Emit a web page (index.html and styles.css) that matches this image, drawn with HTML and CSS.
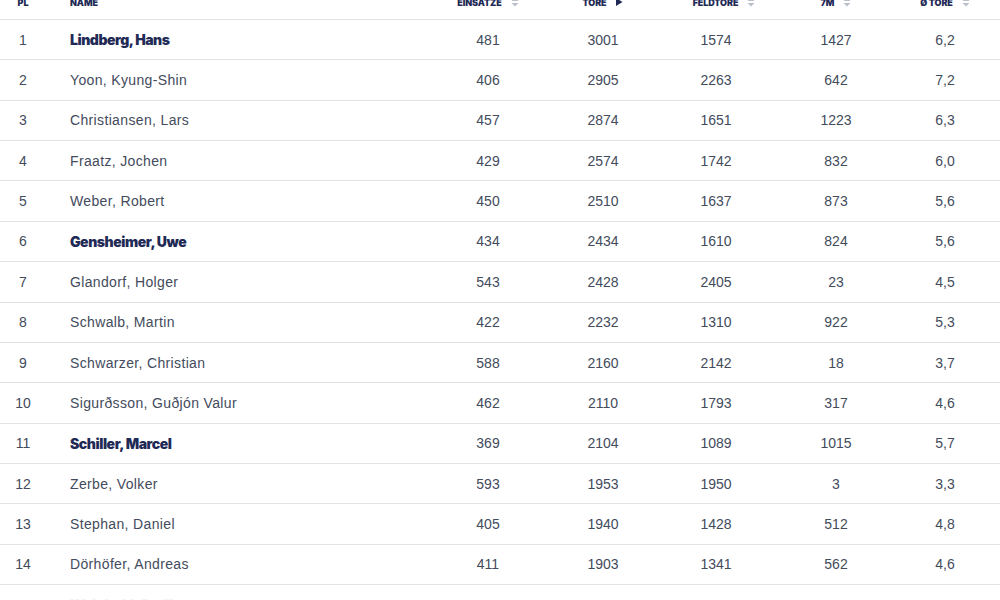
FILE: index.html
```html
<!DOCTYPE html>
<html lang="de">
<head>
<meta charset="utf-8">
<title>Ewige Torjägerliste</title>
<link rel="stylesheet" href="styles.css">
</head>
<body>
<div class="board">
  <div class="row head">
    <div class="c pl">PL</div>
    <div class="c name">NAME</div>
    <div class="c num"><span>EINSÄTZE</span><svg class="sort" viewBox="0 0 8 10" width="8" height="10"><polygon points="0.5,4 4,0.5 7.5,4"/><polygon points="0.5,6 4,9.5 7.5,6"/></svg></div>
    <div class="c num"><span>TORE</span><svg class="sort active" viewBox="0 0 8 10" width="8" height="10"><polygon points="1,1 7.5,5 1,9"/></svg></div>
    <div class="c num feld"><span>FELDTORE</span><svg class="sort" viewBox="0 0 8 10" width="8" height="10"><polygon points="0.5,4 4,0.5 7.5,4"/><polygon points="0.5,6 4,9.5 7.5,6"/></svg></div>
    <div class="c num"><span>7M</span><svg class="sort" viewBox="0 0 8 10" width="8" height="10"><polygon points="0.5,4 4,0.5 7.5,4"/><polygon points="0.5,6 4,9.5 7.5,6"/></svg></div>
    <div class="c num"><span>Ø TORE</span><svg class="sort" viewBox="0 0 8 10" width="8" height="10"><polygon points="0.5,4 4,0.5 7.5,4"/><polygon points="0.5,6 4,9.5 7.5,6"/></svg></div>
    <div class="c"></div>
  </div>

  <div class="row"><div class="c pl">1</div><div class="c name active">Lindberg, Hans</div><div class="c num">481</div><div class="c num">3001</div><div class="c num">1574</div><div class="c num">1427</div><div class="c num">6,2</div><div class="c"></div></div>
  <div class="row"><div class="c pl">2</div><div class="c name">Yoon, Kyung-Shin</div><div class="c num">406</div><div class="c num">2905</div><div class="c num">2263</div><div class="c num">642</div><div class="c num">7,2</div><div class="c"></div></div>
  <div class="row"><div class="c pl">3</div><div class="c name">Christiansen, Lars</div><div class="c num">457</div><div class="c num">2874</div><div class="c num">1651</div><div class="c num">1223</div><div class="c num">6,3</div><div class="c"></div></div>
  <div class="row"><div class="c pl">4</div><div class="c name">Fraatz, Jochen</div><div class="c num">429</div><div class="c num">2574</div><div class="c num">1742</div><div class="c num">832</div><div class="c num">6,0</div><div class="c"></div></div>
  <div class="row"><div class="c pl">5</div><div class="c name">Weber, Robert</div><div class="c num">450</div><div class="c num">2510</div><div class="c num">1637</div><div class="c num">873</div><div class="c num">5,6</div><div class="c"></div></div>
  <div class="row"><div class="c pl">6</div><div class="c name active">Gensheimer, Uwe</div><div class="c num">434</div><div class="c num">2434</div><div class="c num">1610</div><div class="c num">824</div><div class="c num">5,6</div><div class="c"></div></div>
  <div class="row"><div class="c pl">7</div><div class="c name">Glandorf, Holger</div><div class="c num">543</div><div class="c num">2428</div><div class="c num">2405</div><div class="c num">23</div><div class="c num">4,5</div><div class="c"></div></div>
  <div class="row"><div class="c pl">8</div><div class="c name">Schwalb, Martin</div><div class="c num">422</div><div class="c num">2232</div><div class="c num">1310</div><div class="c num">922</div><div class="c num">5,3</div><div class="c"></div></div>
  <div class="row"><div class="c pl">9</div><div class="c name">Schwarzer, Christian</div><div class="c num">588</div><div class="c num">2160</div><div class="c num">2142</div><div class="c num">18</div><div class="c num">3,7</div><div class="c"></div></div>
  <div class="row"><div class="c pl">10</div><div class="c name">Sigurðsson, Guðjón Valur</div><div class="c num">462</div><div class="c num">2110</div><div class="c num">1793</div><div class="c num">317</div><div class="c num">4,6</div><div class="c"></div></div>
  <div class="row"><div class="c pl">11</div><div class="c name active">Schiller, Marcel</div><div class="c num">369</div><div class="c num">2104</div><div class="c num">1089</div><div class="c num">1015</div><div class="c num">5,7</div><div class="c"></div></div>
  <div class="row"><div class="c pl">12</div><div class="c name">Zerbe, Volker</div><div class="c num">593</div><div class="c num">1953</div><div class="c num">1950</div><div class="c num">3</div><div class="c num">3,3</div><div class="c"></div></div>
  <div class="row"><div class="c pl">13</div><div class="c name">Stephan, Daniel</div><div class="c num">405</div><div class="c num">1940</div><div class="c num">1428</div><div class="c num">512</div><div class="c num">4,8</div><div class="c"></div></div>
  <div class="row"><div class="c pl">14</div><div class="c name">Dörhöfer, Andreas</div><div class="c num">411</div><div class="c num">1903</div><div class="c num">1341</div><div class="c num">562</div><div class="c num">4,6</div><div class="c"></div></div>
  <div class="row faded"><div class="c pl">15</div><div class="c name active">Weinhold, Steffen</div><div class="c num">434</div><div class="c num">1877</div><div class="c num">1532</div><div class="c num">345</div><div class="c num">4,3</div><div class="c"></div></div>
</div>
</body>
</html>
```

FILE: styles.css
```css
html, body {
  margin: 0;
  padding: 0;
  background: #ffffff;
  overflow: hidden;
}

body {
  font-family: "Liberation Sans", Arial, sans-serif;
  font-size: 14px;
  color: #434b5c;
}

.board {
  margin-top: -11px;
}

.row {
  display: grid;
  grid-template-columns: 46px 387px 110px 120px 106px 134px 84px 1fr;
  height: 40.36px;
  box-sizing: border-box;
  border-bottom: 1px solid #e1e3e6;
  align-items: center;
}

.c {
  white-space: nowrap;
}

.pl {
  text-align: center;
}

.name {
  padding-left: 24px;
  letter-spacing: 0.35px;
}

.num {
  text-align: center;
}

.name.active {
  font-family: Inter, "Liberation Sans", sans-serif;
  font-weight: 900;
  color: #1f2a56;
  letter-spacing: -0.45px;
}

.head {
  height: 31px;
  padding-bottom: 4px;
  font-family: Inter, "Liberation Sans", sans-serif;
  font-size: 9px;
  font-weight: 900;
  color: #1f2a56;
  letter-spacing: -0.1px;
}

.head .name {
  letter-spacing: -0.1px;
}

.head .num {
  display: flex;
  justify-content: center;
  align-items: center;
  gap: 9px;
}

.head .feld {
  padding-left: 16px;
}

.sort {
  fill: #b9c0cc;
  flex: none;
}

.sort.active {
  fill: #1f2a56;
}

.faded {
  color: #f5f6f7;
  border-bottom-color: transparent;
}

.faded .name.active {
  color: #f1f2f5;
}
```
